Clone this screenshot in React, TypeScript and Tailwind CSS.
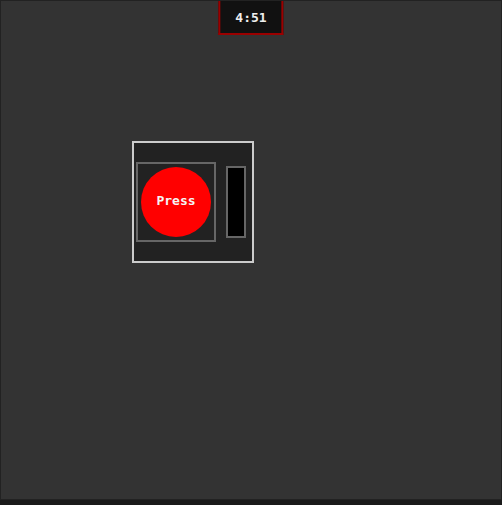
export default function App() {
  return (
    <div className="w-[502px] h-[505px] bg-[#1a1a1a]" style={{ fontFamily: '"DejaVu Sans Mono", monospace' }}>
      <div className="relative h-[500px] border border-[#222] bg-[#333] pl-[131px] pt-[140px]">
        <div className="absolute left-1/2 top-0 -translate-x-1/2 border-2 border-t-0 border-[#9b0000] bg-[#111] px-[15px] pt-[8px] pb-[7px] text-[13px] font-bold leading-[17px] text-[#eee]">
          4:51
        </div>
        <div className="flex h-[122px] w-[122px] items-center gap-[10px] border-2 border-[#ccc] bg-[#222] pl-[2px]">
          <div className="flex h-[80px] w-[80px] items-center justify-center border-2 border-[#666]">
            <button className="flex h-[70px] w-[70px] items-center justify-center rounded-full bg-[#f00] pb-[2px] text-[13px] font-bold text-[#f5f5f5]">
              Press
            </button>
          </div>
          <div className="h-[72px] w-[20px] border-2 border-[#666] bg-black" />
        </div>
      </div>
    </div>
  )
}
